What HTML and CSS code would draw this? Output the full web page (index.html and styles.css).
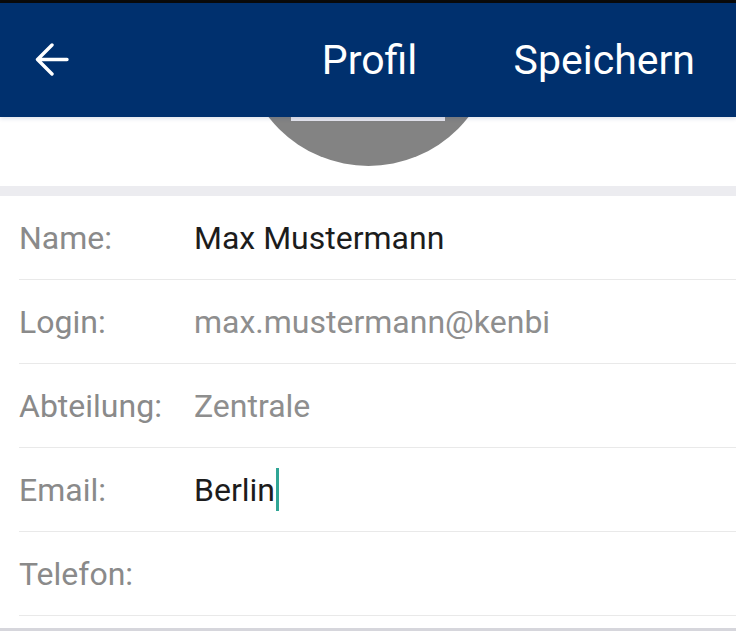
FILE: index.html
```html
<!DOCTYPE html>
<html lang="de">
<head>
<meta charset="utf-8">
<title>Profil</title>
<link rel="stylesheet" href="styles.css">
</head>
<body>
<div class="statusbar"></div>
<header class="appbar">
  <div class="appbar-left">
    <svg class="back" width="34" height="33" viewBox="0 0 34 33" aria-label="Zurück">
      <path d="M32 16.5H3 M17 2 L2.5 16.5 L17 31" fill="none" stroke="#fff" stroke-width="3.4" stroke-linecap="round" stroke-linejoin="round"/>
    </svg>
  </div>
  <div class="title">Profil</div>
  <div class="appbar-right"><span class="action">Speichern</span></div>
</header>
<section class="avatar-area">
  <div class="avatar"></div>
  <div class="avatar-strip"></div>
</section>
<div class="band"></div>
<main class="form">
  <div class="row"><span class="label">Name:</span><span class="value">Max Mustermann</span></div>
  <div class="row"><span class="label">Login:</span><span class="value muted">max.mustermann@kenbi</span></div>
  <div class="row"><span class="label">Abteilung:</span><span class="value muted">Zentrale</span></div>
  <div class="row"><span class="label">Email:</span><span class="value">Berlin<span class="cursor"></span></span></div>
  <div class="row"><span class="label">Telefon:</span><span class="value"></span></div>
</main>
<div class="bottom-edge"></div>
</body>
</html>
```
FILE: styles.css
```css
html, body {
  margin: 0;
  padding: 0;
  background: #ffffff;
  width: 736px;
  height: 631px;
  overflow: hidden;
  font-family: Roboto, "Noto Sans", "Liberation Sans", sans-serif;
}
.statusbar {
  height: 3px;
  background: #0a0a0a;
}
.appbar {
  height: 114px;
  background: #00306e;
  display: grid;
  grid-template-columns: 1fr auto 1fr;
  align-items: center;
  padding: 0 40px;
  box-shadow: 0 2px 4px rgba(0, 40, 110, 0.12);
  position: relative;
  z-index: 2;
}
.appbar-left {
  display: flex;
  align-items: center;
}
.back {
  display: block;
  margin-top: -1px;
  margin-left: -5px;
}
.title {
  color: #ffffff;
  font-size: 41px;
  line-height: 1;
  margin-top: 1px;
  margin-left: 3px;
}
.appbar-right {
  display: flex;
  justify-content: flex-end;
}
.action {
  color: #ffffff;
  font-size: 41px;
  line-height: 1;
  margin-top: 1px;
  margin-right: 1px;
}
.avatar-area {
  height: 69px;
  overflow: hidden;
  position: relative;
  display: flex;
  justify-content: center;
}
.avatar {
  width: 253px;
  height: 253px;
  border-radius: 50%;
  background: #838383;
  margin-top: -204px;
  margin-left: 1px;
  flex: none;
}
.avatar-strip {
  position: absolute;
  top: 0;
  left: 291px;
  width: 154px;
  height: 4px;
  background: #e6e6ee;
}
.band {
  height: 10px;
  background: #ececf0;
}
.form {
  padding-left: 19px;
}
.row {
  height: 83px;
  border-bottom: 1px solid #e9e9e9;
  display: flex;
  align-items: center;
  font-size: 32px;
}
.label {
  width: 175px;
  flex: none;
  color: #8a8a8a;
}
.value {
  color: #1c1c1c;
  display: flex;
  align-items: center;
}
.value.muted {
  color: #8e8e8e;
}
.cursor {
  display: inline-block;
  width: 3px;
  height: 43px;
  background: #2fa595;
  margin-left: 1px;
}
.bottom-edge {
  height: 3px;
  margin-top: 12px;
  background: #d6d6dc;
}
```
